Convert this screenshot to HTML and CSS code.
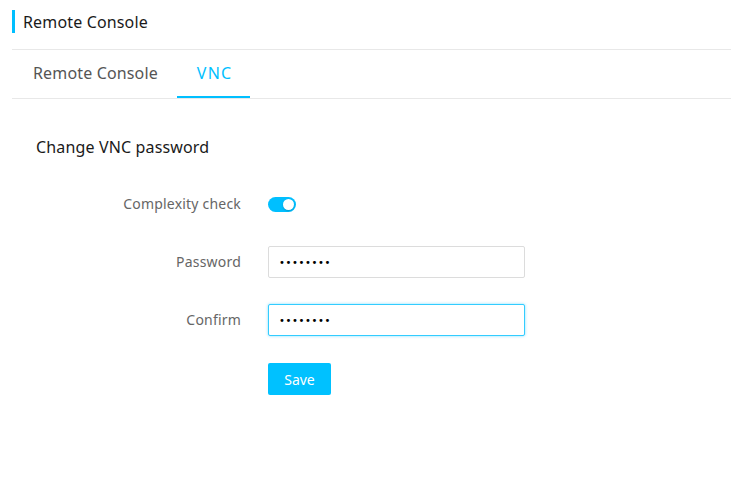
FILE: index.html
```html
<!DOCTYPE html>
<html>
<head>
<meta charset="utf-8">
<link rel="stylesheet" href="styles.css">
</head>
<body>
<div class="page">
  <div class="header">
    <span class="bar"></span>
    <span class="title">Remote Console</span>
  </div>
  <div class="tabs">
    <div class="tab">Remote Console</div>
    <div class="tab active">VNC</div>
  </div>
  <div class="content">
    <h2 class="heading">Change VNC password</h2>
    <div class="form">
      <div class="row">
        <label class="label">Complexity check</label>
        <div class="control"><span class="switch"><span class="knob"></span></span></div>
      </div>
      <div class="row">
        <label class="label">Password</label>
        <div class="control"><input class="input" type="password" value="12345678"></div>
      </div>
      <div class="row">
        <label class="label">Confirm</label>
        <div class="control"><input class="input focus" type="password" value="12345678"></div>
      </div>
      <div class="row row-action">
        <span class="label"></span>
        <div class="control"><button class="btn">Save</button></div>
      </div>
    </div>
  </div>
</div>
</body>
</html>
```
FILE: styles.css
```css
* { box-sizing: border-box; }
body {
  margin: 0;
  background: #fff;
  font-family: "Noto Sans", "Open Sans", sans-serif;
  color: #222;
}
.page { margin-left: 12px; }
.header {
  height: 50px;
  display: flex;
  align-items: flex-start;
  padding-top: 10px;
  border-bottom: 1px solid #e8e8e8;
}
.bar {
  width: 3px;
  height: 23px;
  background: #00bfff;
  margin-right: 8px;
}
.title {
  font-size: 16px;
  line-height: 23px;
  padding-top: 1px;
  letter-spacing: 0.15px;
  color: #1a1a1a;
}
.tabs {
  display: flex;
  height: 49px;
  border-bottom: 1px solid #e8e8e8;
  padding-left: 1px;
}
.tab {
  padding: 0 19px 0 20px;
  font-size: 16px;
  line-height: 47px;
  letter-spacing: 0.15px;
  color: #555;
  border-bottom: 2px solid transparent;
}
.tab.active {
  color: #00bfff;
  letter-spacing: 1.2px;
  padding: 0 18px 0 20px;
  border-bottom-color: #00bfff;
}
.content { padding: 0 24px; }
.heading {
  margin: 36px 0 0;
  font-size: 16px;
  font-weight: normal;
  line-height: 24px;
  letter-spacing: 0.15px;
  color: #1a1a1a;
}
.form {
  margin-top: 29px;
  display: flex;
  flex-direction: column;
  gap: 26px;
}
.row {
  display: flex;
  align-items: center;
  height: 32px;
}
.row-action { margin-top: 1px; }
.label {
  width: 205px;
  text-align: right;
  font-size: 14px;
  line-height: 20px;
  padding-bottom: 1px;
  letter-spacing: 0.2px;
  color: #666;
}
.control {
  margin-left: 27px;
  display: flex;
  align-items: center;
}
.switch {
  width: 28px;
  height: 15px;
  border-radius: 8px;
  background: #00bfff;
  position: relative;
}
.knob {
  position: absolute;
  top: 2px;
  right: 2px;
  width: 11px;
  height: 11px;
  border-radius: 50%;
  background: #fff;
  box-shadow: 0 1px 2px rgba(0,0,0,0.2);
}
.input {
  width: 257px;
  height: 32px;
  border: 1px solid #dcdcdc;
  border-radius: 2px;
  padding: 0 10px;
  font-size: 10px;
  letter-spacing: 0.6px;
  color: #000;
  outline: none;
  font-family: "DejaVu Sans", sans-serif;
}
.input.focus {
  border-color: #33ccff;
  box-shadow: 0 0 3px rgba(0,191,255,0.5);
}
.btn {
  width: 63px;
  height: 32px;
  border: none;
  border-radius: 2px;
  background: #00c1ff;
  color: #fff;
  font-size: 14px;
  font-family: "Noto Sans", sans-serif;
}
```
